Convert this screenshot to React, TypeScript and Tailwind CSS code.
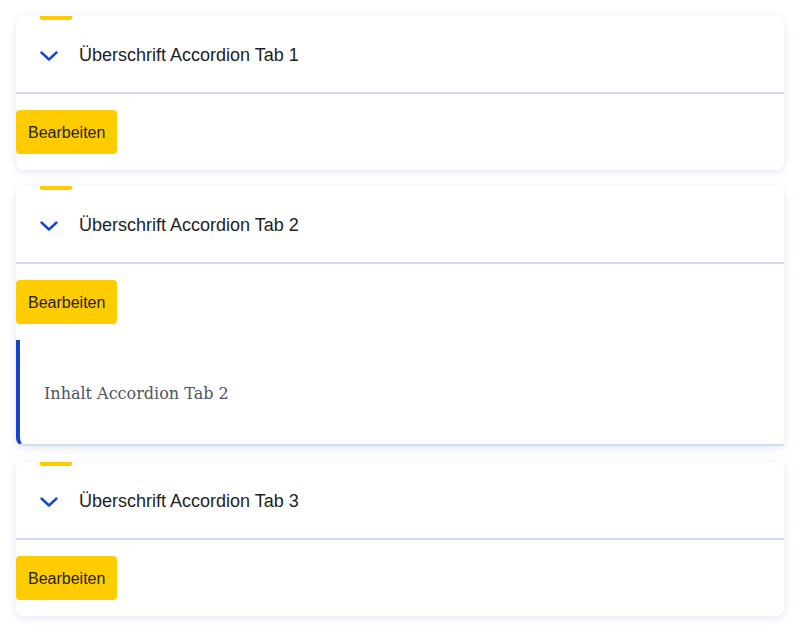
import React from "react";

const Chevron = () => (
  <svg width="18" height="10" viewBox="0 0 18 10" fill="none" className="shrink-0">
    <polyline points="1.5,1.5 9,8.5 16.5,1.5" stroke="#1a47cf" strokeWidth="2.4" strokeLinecap="round" strokeLinejoin="round" />
  </svg>
);

function Card({ title, open }: { title: string; open?: boolean }) {
  return (
    <div className="relative bg-white rounded-lg shadow-[0_2px_8px_rgba(40,70,170,0.13)]">
      <div className="absolute left-[24px] top-0 w-[32px] h-[4px] bg-[#ffcc00] rounded-b-[2px]" />
      <div className="h-[78px] flex items-center pl-[24px] pt-[3px] border-b-2 border-[#d3dcf2]">
        <Chevron />
        <span className="ml-[21px] text-[18px] text-[#1e1e1e]" style={{ fontFamily: '"Liberation Sans", Arial, sans-serif' }}>
          {title}
        </span>
      </div>
      <div className="py-4">
        <button
          className="h-[44px] px-3 pt-px bg-[#ffcc00] rounded text-[16px] text-[#1e1e1e]"
          style={{ fontFamily: '"Liberation Sans", Arial, sans-serif' }}
        >
          Bearbeiten
        </button>
      </div>
      {open && (
        <div className="border-l-4 border-[#1444cc] rounded-bl-lg border-b-2 border-b-[#d3dcf2] h-[106px] flex items-center pl-[24px] pt-1">
          <span className="text-[16px] text-[#50545c]" style={{ fontFamily: '"DejaVu Serif", serif' }}>
            Inhalt Accordion Tab 2
          </span>
        </div>
      )}
    </div>
  );
}

export default function App() {
  return (
    <div className="w-[800px] h-[632px] bg-white p-4 flex flex-col gap-4">
      <Card title="Überschrift Accordion Tab 1" />
      <Card title="Überschrift Accordion Tab 2" open />
      <Card title="Überschrift Accordion Tab 3" />
    </div>
  );
}
